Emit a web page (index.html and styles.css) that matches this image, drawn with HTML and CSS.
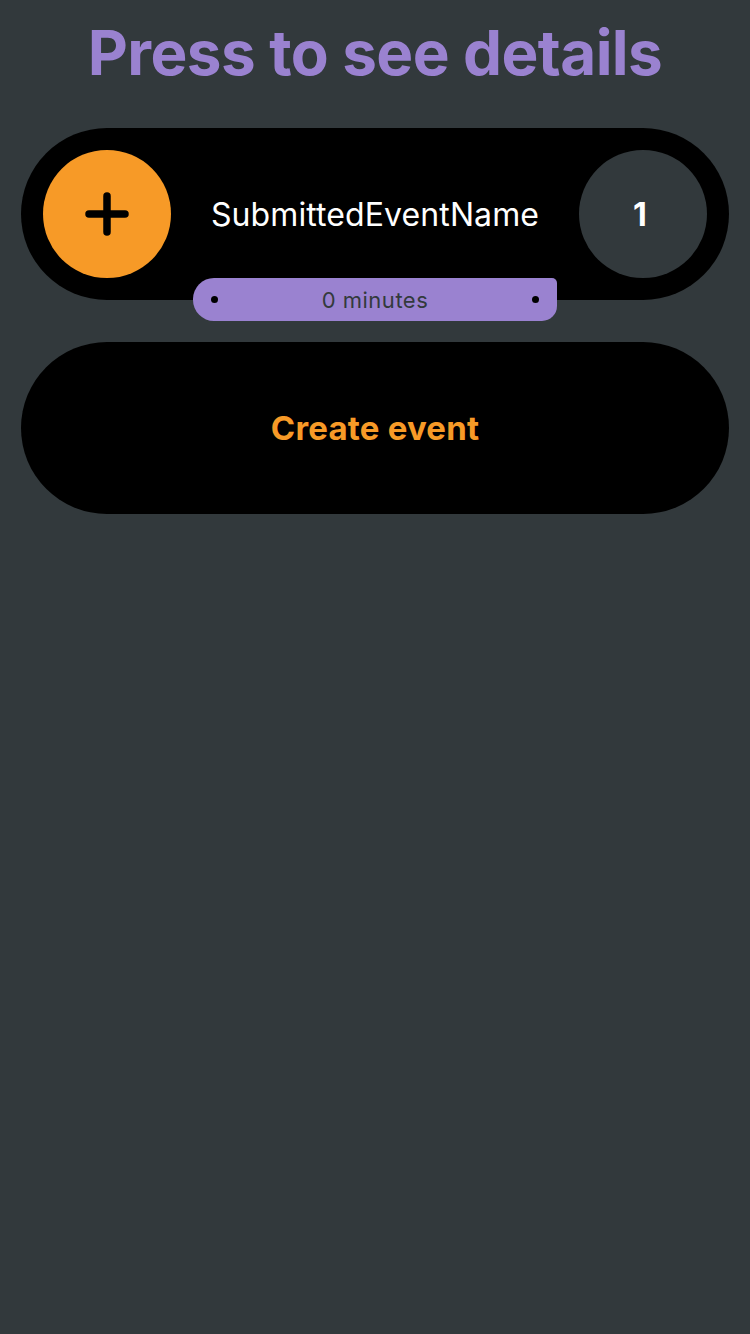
FILE: index.html
```html
<!DOCTYPE html>
<html>
<head>
<meta charset="utf-8">
<link rel="stylesheet" href="styles.css">
</head>
<body>
<div class="page">
  <h1 class="title">Press to see details</h1>
  <div class="event-card">
    <div class="add-btn">
      <svg width="44" height="44" viewBox="0 0 44 44"><path d="M22 4 V40 M4 22 H40" stroke="#000" stroke-width="7.5" stroke-linecap="round" fill="none"/></svg>
    </div>
    <div class="event-name">SubmittedEventName</div>
    <div class="count">1</div>
    <div class="duration">
      <span class="dot"></span>
      <span class="duration-text">0 minutes</span>
      <span class="dot"></span>
    </div>
  </div>
  <div class="create-btn">Create event</div>
</div>
</body>
</html>
```
FILE: styles.css
```css
html, body {
  margin: 0;
  padding: 0;
  background: #32393c;
  font-family: Inter, "Noto Sans", sans-serif;
}
.page {
  padding: 0 21px;
  width: 750px;
  box-sizing: border-box;
}
.title {
  margin: 0;
  padding-top: 16px;
  height: 74px;
  line-height: 74px;
  font-size: 62px;
  font-weight: 700;
  color: #9a82d0;
  text-align: center;
  letter-spacing: -0.6px;
}
.event-card {
  position: relative;
  margin-top: 38px;
  background: #000;
  border-radius: 86px;
  padding: 22px;
  display: flex;
  align-items: center;
}
.add-btn {
  width: 128px;
  height: 128px;
  border-radius: 50%;
  background: #f79a27;
  display: flex;
  align-items: center;
  justify-content: center;
}
.add-btn svg {
  display: block;
}
.event-name {
  flex: 1;
  text-align: center;
  color: #fff;
  font-size: 32px;
  font-weight: 400;
  letter-spacing: 0.1px;
}
.count {
  width: 128px;
  height: 128px;
  border-radius: 50%;
  background: #32393c;
  color: #fff;
  font-size: 32px;
  font-weight: 700;
  display: flex;
  align-items: center;
  justify-content: center;
  box-sizing: border-box;
  padding-right: 6px;
}
.duration {
  position: absolute;
  left: 172px;
  top: 150px;
  width: 364px;
  height: 43px;
  box-sizing: border-box;
  background: #9a82d0;
  border-radius: 21px 5px 15px 21px;
  display: flex;
  align-items: center;
  justify-content: space-between;
  padding: 0 18px;
}
.dot {
  width: 7px;
  height: 7px;
  border-radius: 50%;
  background: #000;
}
.duration-text {
  color: #333a3c;
  font-size: 22px;
  font-weight: 400;
  letter-spacing: 0.5px;
}
.create-btn {
  margin-top: 42px;
  height: 172px;
  border-radius: 86px;
  background: #000;
  color: #f79a27;
  font-size: 33px;
  font-weight: 700;
  letter-spacing: 0.2px;
  display: flex;
  align-items: center;
  justify-content: center;
}
```
